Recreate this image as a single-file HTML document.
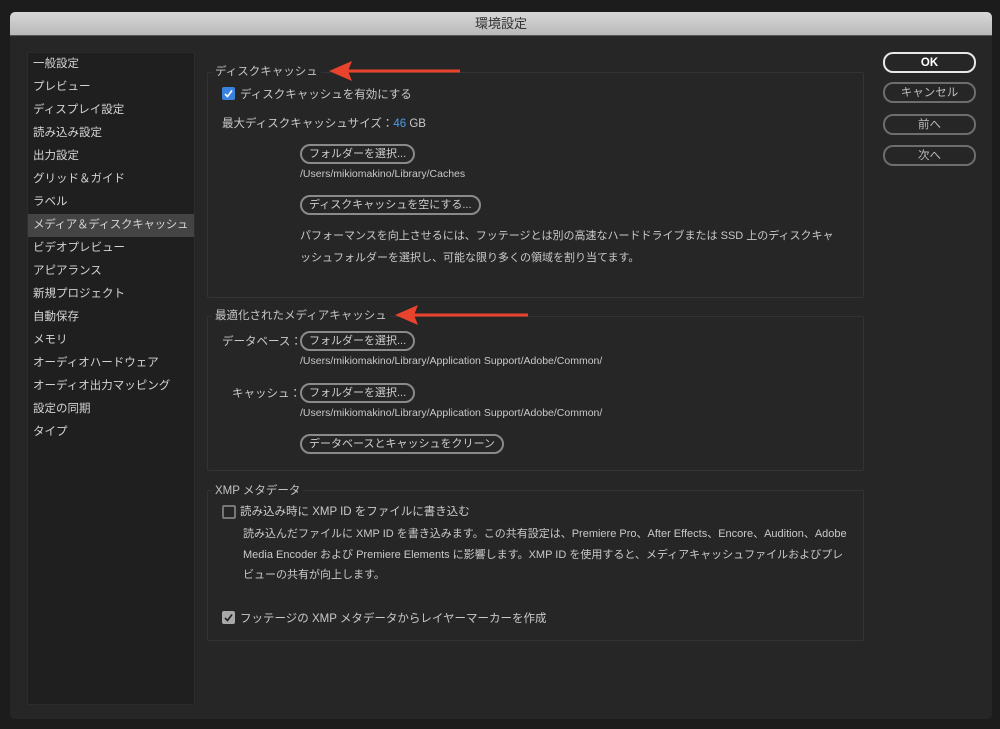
<!DOCTYPE html>
<html><head><meta charset="utf-8"><style>
body{margin:0;width:1000px;height:729px;background:#1c1c1c;position:relative;overflow:hidden;font-family:"Liberation Sans","Noto Sans CJK JP",sans-serif;font-size:11.5px;color:#c9c9c9}
.a{position:absolute;white-space:nowrap}
.dlg{position:absolute;left:10px;top:12px;width:982px;height:707px;background:#262626;border-radius:5px;overflow:hidden}
.tb{position:absolute;left:0;top:0;width:100%;height:23px;background:linear-gradient(#d8d8d8,#b8b8b8);color:#333;text-align:center;font-size:13px;line-height:23px;border-bottom:1px solid #555}
.side{position:absolute;left:27px;top:52px;width:166px;height:651px;background:#1f1f1f;border:1px solid #2c2c2c;border-radius:2px}
.side div{height:23px;line-height:23px;padding-left:5px;font-size:11.5px;color:#d4d4d4;white-space:nowrap;overflow:hidden}
.side .sel{background:#444;letter-spacing:-0.3px}
.grp{position:absolute;border:1px solid #333;border-radius:2px}
.gt{position:absolute;background:#262626;padding:0 3px;color:#c4c4c4}
.btn{position:absolute;border:2px solid #8a8a8a;border-radius:10px;height:16px;line-height:17px;text-align:center;color:#cfcfcf;padding:0 7px;font-size:11px}
.rb{position:absolute;left:883px;width:89px;height:17px;line-height:19px;border:2px solid #6d6d6d;border-radius:10px;text-align:center;color:#bdbdbd}
.cb{position:absolute;width:11px;height:11px;border-radius:2px}
</style></head><body>
<div class="dlg"><div class="tb">環境設定</div></div>
<div class="side">
<div>一般設定</div><div>プレビュー</div><div>ディスプレイ設定</div><div>読み込み設定</div><div>出力設定</div><div>グリッド＆ガイド</div><div>ラベル</div><div class="sel">メディア＆ディスクキャッシュ</div><div>ビデオプレビュー</div><div>アピアランス</div><div>新規プロジェクト</div><div>自動保存</div><div>メモリ</div><div>オーディオハードウェア</div><div>オーディオ出力マッピング</div><div>設定の同期</div><div>タイプ</div>
</div>
<div class="grp" style="left:207px;top:72px;width:655px;height:224px"></div>
<div class="gt a" style="left:212px;top:63px">ディスクキャッシュ</div>
<svg class="a" style="left:326px;top:58px" width="136" height="26"><path d="M20 13H134" stroke="#e8432d" stroke-width="3"/><path d="M3 13L26 3L22 13L26 23Z" fill="#e8432d"/></svg>
<div class="cb" style="left:222px;top:87px;background:#3a82e0;width:13px;height:13px"><svg width="13" height="13"><path d="M3 7L5.5 9.5L10 3.5" stroke="#fff" stroke-width="1.6" fill="none"/></svg></div>
<div class="a" style="left:240px;top:86px">ディスクキャッシュを有効にする</div>
<div class="a" style="left:222px;top:115px">最大ディスクキャッシュサイズ：<span style="color:#4a9be8">46</span> GB</div>
<div class="btn" style="left:300px;top:144px">フォルダーを選択...</div>
<div class="a" style="left:300px;top:168px;font-size:10.5px">/Users/mikiomakino/Library/Caches</div>
<div class="btn" style="left:300px;top:195px">ディスクキャッシュを空にする...</div>
<div class="a" style="left:300px;top:225px;line-height:22px;font-size:11px">パフォーマンスを向上させるには、フッテージとは別の高速なハードドライブまたは SSD 上のディスクキャ<br>ッシュフォルダーを選択し、可能な限り多くの領域を割り当てます。</div>

<div class="grp" style="left:207px;top:316px;width:655px;height:153px"></div>
<div class="gt a" style="left:212px;top:307px">最適化されたメディアキャッシュ</div>
<svg class="a" style="left:392px;top:302px" width="138" height="26"><path d="M20 13H136" stroke="#e8432d" stroke-width="3"/><path d="M3 13L26 3L22 13L26 23Z" fill="#e8432d"/></svg>
<div class="a" style="left:222px;top:333px">データベース：</div>
<div class="btn" style="left:300px;top:331px">フォルダーを選択...</div>
<div class="a" style="left:300px;top:355px;font-size:10.5px">/Users/mikiomakino/Library/Application Support/Adobe/Common/</div>
<div class="a" style="left:232px;top:385px">キャッシュ：</div>
<div class="btn" style="left:300px;top:383px">フォルダーを選択...</div>
<div class="a" style="left:300px;top:407px;font-size:10.5px">/Users/mikiomakino/Library/Application Support/Adobe/Common/</div>
<div class="btn" style="left:300px;top:434px">データベースとキャッシュをクリーン</div>

<div class="grp" style="left:207px;top:490px;width:655px;height:149px"></div>
<div class="gt a" style="left:212px;top:482px">XMP メタデータ</div>
<div class="cb" style="left:222px;top:505px;border:2px solid #777;width:10px;height:10px"></div>
<div class="a" style="left:240px;top:503px">読み込み時に XMP ID をファイルに書き込む</div>
<div class="a" style="left:243px;top:524px;line-height:20.5px;font-size:11px">読み込んだファイルに XMP ID を書き込みます。この共有設定は、Premiere Pro、After Effects、Encore、Audition、Adobe<br>Media Encoder および Premiere Elements に影響します。XMP ID を使用すると、メディアキャッシュファイルおよびプレ<br>ビューの共有が向上します。</div>
<div class="cb" style="left:222px;top:611px;background:#a8a8a8;width:13px;height:13px"><svg width="13" height="13"><path d="M3 7L5.5 9.5L10 3.5" stroke="#222" stroke-width="1.6" fill="none"/></svg></div>
<div class="a" style="left:240px;top:610px">フッテージの XMP メタデータからレイヤーマーカーを作成</div>

<div class="rb" style="top:52px;border-color:#e8e8e8;color:#fff;font-weight:bold">OK</div>
<div class="rb" style="top:82px">キャンセル</div>
<div class="rb" style="top:114px">前へ</div>
<div class="rb" style="top:145px">次へ</div>
</body></html>
